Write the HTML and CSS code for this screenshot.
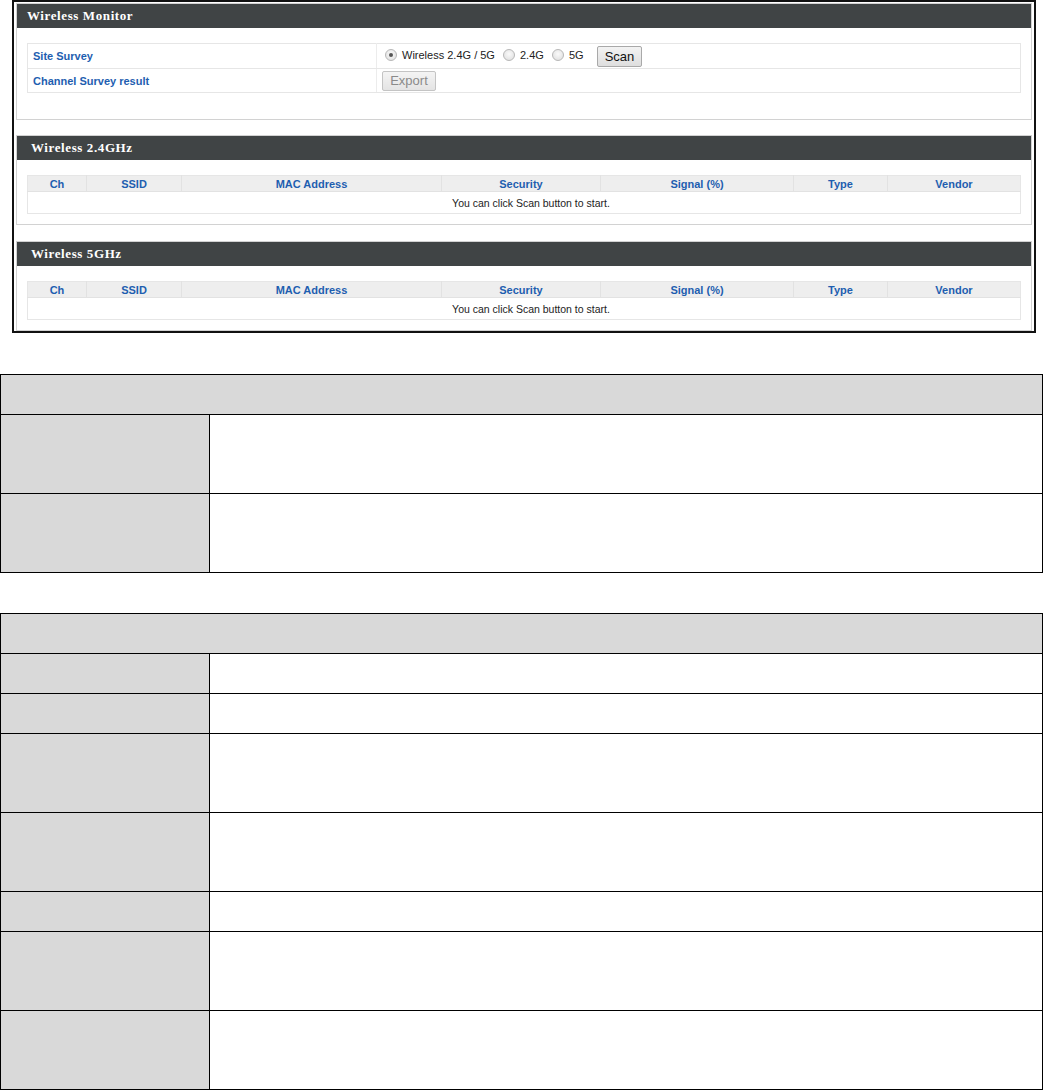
FILE: index.html
```html
<!DOCTYPE html>
<html lang="en">
<head>
<meta charset="utf-8">
<title>Wireless Monitor</title>
<link rel="stylesheet" href="styles.css">
</head>
<body>
<div class="shot">
  <section class="panel panel-first">
    <div class="panel-head head-monitor">Wireless Monitor</div>
    <div class="panel-body body-monitor">
      <table class="form-table">
        <tr>
          <td class="lbl">Site Survey</td>
          <td class="val">
            <span class="radio checked"></span><span class="rtext">Wireless 2.4G / 5G</span>
            <span class="radio"></span><span class="rtext">2.4G</span>
            <span class="radio"></span><span class="rtext">5G</span>
            <button class="btn btn-scan">Scan</button>
          </td>
        </tr>
        <tr>
          <td class="lbl">Channel Survey result</td>
          <td class="val"><button class="btn btn-export" disabled>Export</button></td>
        </tr>
      </table>
    </div>
  </section>

  <section class="panel panel-24">
    <div class="panel-head">Wireless 2.4GHz</div>
    <div class="panel-body body-list">
      <table class="list-table">
        <tr>
          <th class="c-ch">Ch</th><th class="c-ssid">SSID</th><th class="c-mac">MAC Address</th><th class="c-sec">Security</th><th class="c-sig">Signal (%)</th><th class="c-type">Type</th><th class="c-vendor">Vendor</th>
        </tr>
        <tr><td colspan="7">You can click Scan button to start.</td></tr>
      </table>
    </div>
  </section>

  <section class="panel panel-5">
    <div class="panel-head">Wireless 5GHz</div>
    <div class="panel-body body-list body-last">
      <table class="list-table">
        <tr>
          <th class="c-ch">Ch</th><th class="c-ssid">SSID</th><th class="c-mac">MAC Address</th><th class="c-sec">Security</th><th class="c-sig">Signal (%)</th><th class="c-type">Type</th><th class="c-vendor">Vendor</th>
        </tr>
        <tr><td colspan="7">You can click Scan button to start.</td></tr>
      </table>
    </div>
  </section>
</div>

<table class="doc-table doc-first">
  <colgroup><col class="col-k"><col></colgroup>
  <tr class="r-head"><td colspan="2"></td></tr>
  <tr class="r-tall"><td class="k"></td><td></td></tr>
  <tr class="r-tall"><td class="k"></td><td></td></tr>
</table>

<table class="doc-table doc-second">
  <colgroup><col class="col-k"><col></colgroup>
  <tr class="r-head"><td colspan="2"></td></tr>
  <tr class="r-short"><td class="k"></td><td></td></tr>
  <tr class="r-short"><td class="k"></td><td></td></tr>
  <tr class="r-tall"><td class="k"></td><td></td></tr>
  <tr class="r-tall"><td class="k"></td><td></td></tr>
  <tr class="r-short"><td class="k"></td><td></td></tr>
  <tr class="r-tall"><td class="k"></td><td></td></tr>
  <tr class="r-tall"><td class="k"></td><td></td></tr>
</table>
</body>
</html>
```
FILE: styles.css
```css
html, body {
  margin: 0;
  padding: 0;
  background: #fff;
}
body {
  font-family: "Liberation Sans", Arial, sans-serif;
  width: 1043px;
}

/* ---------- screenshot frame ---------- */
.shot {
  margin-left: 12px;
  width: 1016px;
  border: 2px solid #111;
  padding: 1px 2px 0 2px;
  box-sizing: content-box;
}
.panel {
  border: 1px solid #d2d2d2;
  background: #fff;
}
.panel + .panel {
  margin-top: 15px;
}
.panel-5 {
  margin-top: 16px !important;
}
.panel-head {
  height: 24px;
  line-height: 24px;
  background: #404445;
  color: #fff;
  font-family: "Liberation Serif", "Times New Roman", serif;
  font-weight: bold;
  font-size: 13px;
  letter-spacing: 0.6px;
  padding-left: 14px;
}
.head-monitor {
  padding-left: 10px;
}
.panel-body {
  padding: 15px 10px 26px 10px;
}
.body-list {
  padding-bottom: 10px;
}
.body-last {
  padding-bottom: 10px;
}

/* form table */
.form-table {
  width: 100%;
  border-collapse: collapse;
  border: 1px solid #e6e6e6;
}
.form-table td {
  border-bottom: 1px solid #e6e6e6;
  font-size: 11px;
  padding: 0 0 0 5px;
  vertical-align: middle;
}
.form-table tr:first-child td {
  height: 24px;
}
.form-table tr:last-child td {
  height: 23px;
}
.form-table td.lbl {
  width: 343px;
  color: #1e5eb0;
  font-weight: bold;
  border-right: 1px solid #ececec;
}
.form-table td.val {
  color: #222;
  padding-left: 8px;
}
.radio {
  display: inline-block;
  width: 10px;
  height: 10px;
  border-radius: 50%;
  border: 1px solid #b8b8b8;
  background: radial-gradient(circle at 50% 40%, #fafafa, #dcdcdc);
  vertical-align: -2px;
  position: relative;
  margin-right: 5px;
}
.radio.checked::after {
  content: "";
  position: absolute;
  left: 3px;
  top: 3px;
  width: 4px;
  height: 4px;
  border-radius: 50%;
  background: #555;
}
.rtext {
  margin-right: 5px;
}
.btn {
  font-family: "Liberation Sans", Arial, sans-serif;
  font-size: 13px;
  border: 1px solid #a9a9a9;
  background: linear-gradient(#f3f3f3, #dedede);
  border-radius: 2px;
  padding: 0 7px;
  height: 21px;
  line-height: 19px;
  color: #111;
  vertical-align: middle;
}
.btn-scan {
  margin-left: 5px;
  width: 45px;
}
.btn-export {
  color: #8a8a8a;
  width: 54px;
  height: 20px;
  line-height: 18px;
  border-color: #c4c4c4;
  background: linear-gradient(#f4f4f4, #e4e4e4);
  margin-left: -3px;
}

/* list table */
.list-table {
  width: 100%;
  border-collapse: collapse;
  border: 1px solid #e6e6e6;
  table-layout: fixed;
}
.list-table th {
  background: #eeeeee;
  color: #1e5eb0;
  font-size: 11px;
  font-weight: bold;
  height: 15px;
  padding: 0;
  border-left: 1px solid #e2e2e2;
  border-bottom: 1px solid #e2e2e2;
}
.list-table th:first-child {
  border-left: none;
}
.list-table td {
  height: 21px;
  font-size: 10.5px;
  color: #222;
  text-align: center;
  padding: 0 0 0 14px;
}
.c-ch { width: 58px; }
.c-ssid { width: 94px; }
.c-mac { width: 259px; }
.c-sec { width: 158px; }
.c-sig { width: 192px; }
.c-type { width: 93px; }

/* ---------- document tables ---------- */
.doc-table {
  width: 1043px;
  border-collapse: collapse;
  table-layout: fixed;
}
.col-k {
  width: 209px;
}
.doc-first {
  margin-top: 41px;
}
.doc-second {
  margin-top: 40px;
}
.doc-table td {
  border: 1px solid #000;
  padding: 0;
  background: #fff;
}
.doc-table td.k {
  background: #d9d9d9;
}
.doc-table .r-head td {
  background: #d9d9d9;
  height: 39px;
}
.doc-table .r-tall td {
  height: 78px;
}
.doc-table .r-short td {
  height: 39px;
}
```
